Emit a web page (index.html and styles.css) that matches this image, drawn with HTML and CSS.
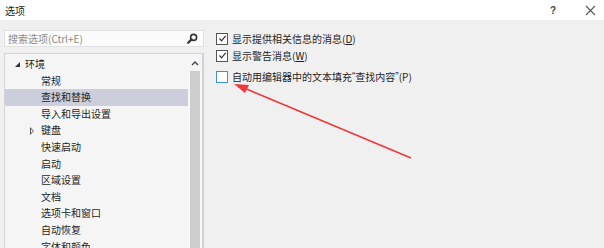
FILE: index.html
```html
<html>
<head>
<meta charset="utf-8">
<link rel="stylesheet" href="styles.css">
</head>
  <body>
    <div class="titlebar">
      <span class="title">选项</span>
      <span class="tbtn help">?</span>
      <span class="tbtn close">
        <svg width="11" height="11" viewBox="0 0 11 11"><path d="M1 1L10 10M10 1L1 10" stroke="#555" stroke-width="1.1" fill="none"/></svg>
      </span>
    </div>
    <div class="main">
      <div class="left">
        <div class="search">
          <span class="placeholder">搜索选项(Ctrl+E)</span>
          <svg class="mag" width="11" height="11" viewBox="0 0 11 11">
            <circle cx="6.6" cy="4.4" r="3" stroke="#333" stroke-width="1.6" fill="none"/>
            <path d="M4.6 6.4L1.2 9.8" stroke="#333" stroke-width="2.2" stroke-linecap="round"/>
          </svg>
        </div>
        <div class="tree">
          <div class="items">
            <div class="row top"><span class="exp open"></span>环境</div>
            <div class="row child">常规</div>
            <div class="row child selected">查找和替换</div>
            <div class="row child">导入和导出设置</div>
            <div class="row sub"><span class="exp closed"></span>键盘</div>
            <div class="row child">快速启动</div>
            <div class="row child">启动</div>
            <div class="row child">区域设置</div>
            <div class="row child">文档</div>
            <div class="row child">选项卡和窗口</div>
            <div class="row child">自动恢复</div>
            <div class="row child">字体和颜色</div>
          </div>
          <div class="scrollbar">
            <svg class="up" width="8" height="5" viewBox="0 0 8 5"><path d="M1 4L4 1L7 4" stroke="#444" stroke-width="1.4" fill="none"/></svg>
            <div class="thumb"></div>
          </div>
        </div>
      </div>
      <div class="right">
        <label class="opt"><span class="box checked"><svg width="9" height="9" viewBox="0 0 9 9"><path d="M1.5 4.5L3.6 6.8L7.6 1.8" stroke="#333" stroke-width="1.2" fill="none"/></svg></span>显示提供相关信息的消息(<u>D</u>)</label>
        <label class="opt"><span class="box checked"><svg width="9" height="9" viewBox="0 0 9 9"><path d="M1.5 4.5L3.6 6.8L7.6 1.8" stroke="#333" stroke-width="1.2" fill="none"/></svg></span>显示警告消息(<u>W</u>)</label>
        <label class="opt third"><span class="box empty"></span>自动用编辑器中的文本填充<span class="q">“</span>查找内容<span class="q">”</span>(P)</label>
      </div>
    </div>
    <!-- red annotation arrow drawn over the dialog -->
    <svg class="annot" width="604" height="248" viewBox="0 0 604 248">
      <path d="M411 158L244 88" stroke="#f0373a" stroke-width="1.6" fill="none"/>
      <path d="M234 84L249 85L245 93Z" fill="#f0373a"/>
    </svg>
  </body>
</html>
```

FILE: styles.css
```css
body {
    margin: 0;
    width: 604px;
    height: 248px;
    overflow: hidden;
    background: #f0f0f0;
    font-family: "Noto Sans CJK SC", "Noto Sans", sans-serif;
    font-size: 10px;
    color: #1e1e1e;
    position: relative;
}

.titlebar {
    height: 20px;
    background: #ffffff;
    display: flex;
    align-items: center;
    padding-left: 5px;
}

.title {
    flex: 1;
    font-size: 10px;
    color: #222;
}

.tbtn {
    display: flex;
    justify-content: center;
    align-items: center;
}

.help {
    width: 50px;
    font-family: "Liberation Sans", sans-serif;
    font-weight: bold;
    font-size: 10px;
    color: #444;
}

.close {
    width: 24px;
    margin-right: 2px;
}

.main {
    display: flex;
    padding: 10px 0 0 4px;
}

.left {
    width: 200px;
    display: flex;
    flex-direction: column;
    gap: 6px;
}

.search {
    height: 15px;
    background: #fbfbfb;
    border: 1px solid #e1e1e1;
    display: flex;
    align-items: center;
    padding: 0 5px 0 3px;
}

.placeholder {
    flex: 1;
    color: #8a8a8a;
    font-size: 10px;
}

.tree {
    height: 200px;
    background: #f5f5f5;
    border: 1px solid #d4d4d4;
    border-right: 2px solid #d0d0da;
    display: flex;
    width: 197px;
}

.items {
    flex: 1;
    padding-top: 2px;
}

.row {
    height: 16.6px;
    line-height: 16.6px;
    display: flex;
    align-items: center;
    white-space: nowrap;
}

.top {
    padding-left: 8px;
}

.child {
    padding-left: 36px;
}

.sub {
    padding-left: 24px;
}

.selected {
    background: #cccedb;
}

.exp {
    display: inline-block;
    width: 12px;
    height: 8px;
    position: relative;
}

.exp.open::before {
    content: "";
    position: absolute;
    left: 2px;
    top: 2px;
    border-left: 5px solid transparent;
    border-bottom: 5px solid #333;
}

.exp.closed::before {
    content: "";
    position: absolute;
    left: 1px;
    top: 0;
    border-top: 4px solid transparent;
    border-bottom: 4px solid transparent;
    border-left: 4px solid #555;
}

.exp.closed::after {
    content: "";
    position: absolute;
    left: 2px;
    top: 2px;
    border-top: 2px solid transparent;
    border-bottom: 2px solid transparent;
    border-left: 2px solid #f5f5f5;
}

.scrollbar {
    width: 14px;
    display: flex;
    flex-direction: column;
    align-items: center;
    padding-top: 7px;
    background: #f5f5f5;
}

.up {
    margin-bottom: 5px;
}

.thumb {
    width: 10px;
    flex: 1;
    background: #cdcdcd;
    border-left: 1px solid #fafafa;
    border-right: 1px solid #fafafa;
}

.right {
    display: flex;
    flex-direction: column;
    padding: 0 0 0 12px;
}

.opt {
    display: flex;
    align-items: center;
    height: 17px;
    white-space: nowrap;
    color: #1e1e1e;
}

.opt.third {
    margin-top: 4px;
}

.opt u {
    text-decoration: underline;
}

.q {
    font-family: "Liberation Sans", sans-serif;
}

.box {
    width: 10px;
    height: 10px;
    border: 1px solid #555;
    background: #ffffff;
    margin-right: 4px;
    display: flex;
    align-items: center;
    justify-content: center;
}

.box.empty {
    border-color: #3d8fd6;
}

.annot {
    position: absolute;
    left: 0;
    top: 0;
}
```
